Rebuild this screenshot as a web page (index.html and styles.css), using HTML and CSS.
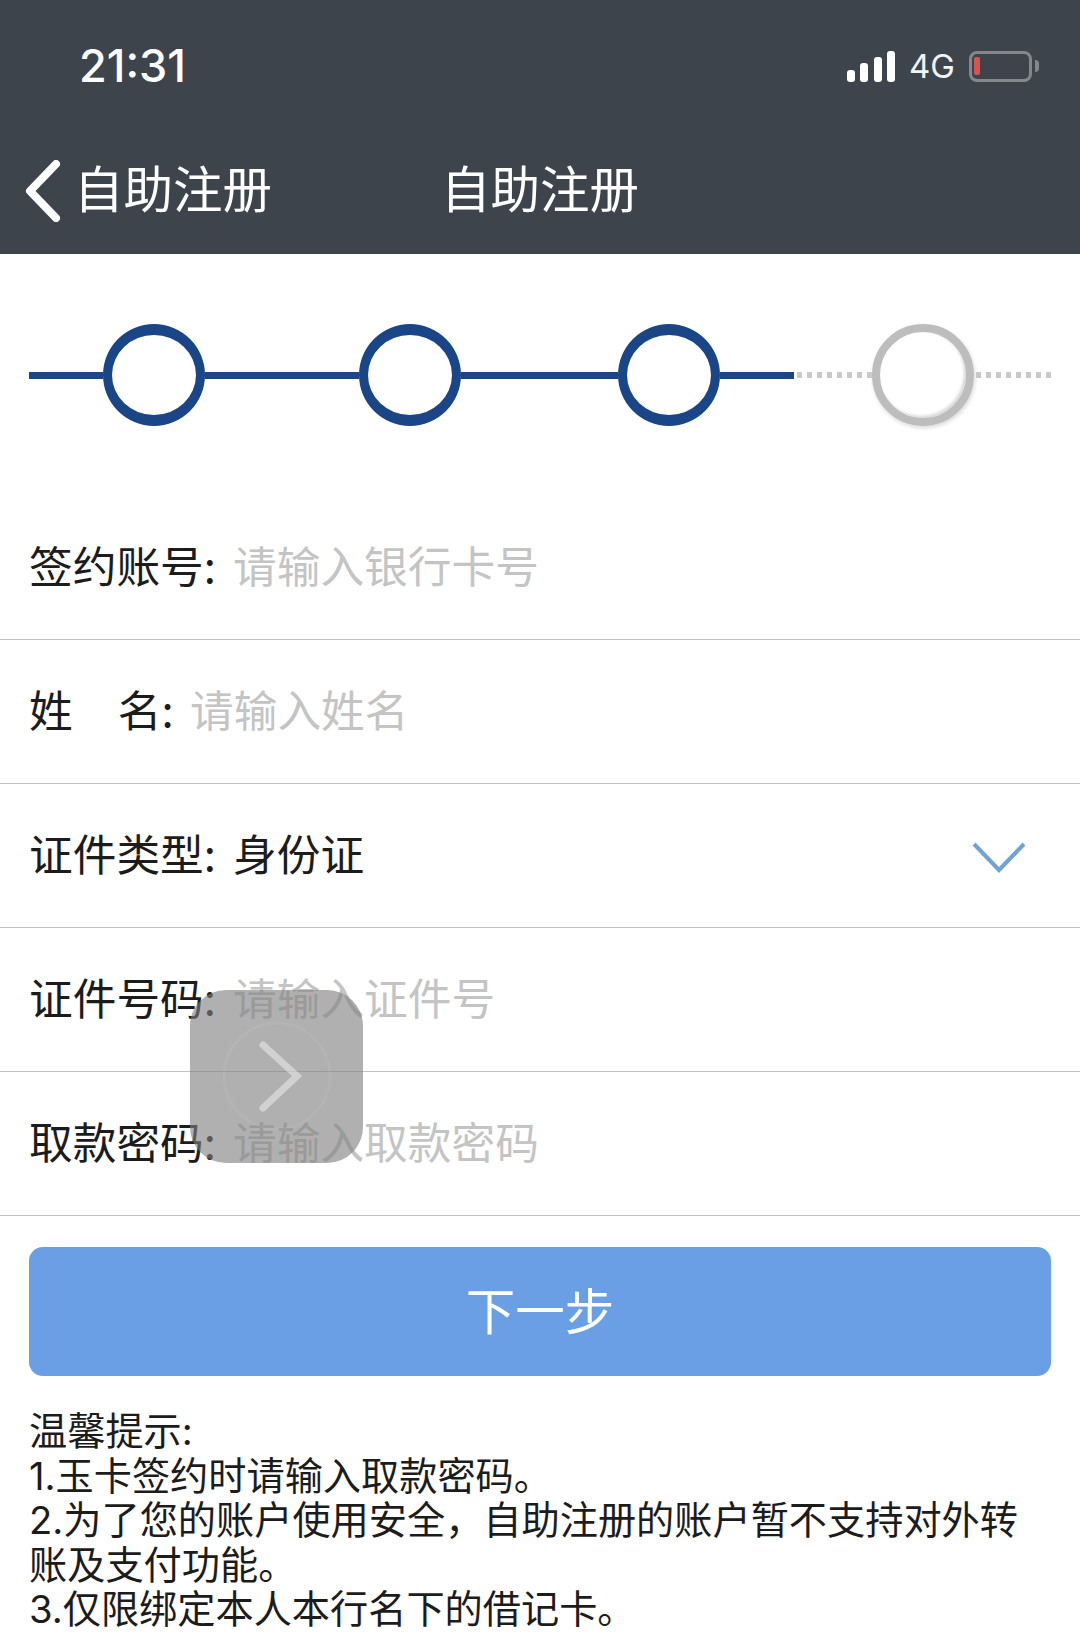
FILE: index.html
```html
<!DOCTYPE html>
<html lang="zh-CN">
<head>
<meta charset="utf-8">
<title>自助注册</title>
<link rel="stylesheet" href="styles.css">
</head>
<body>
<div class="page">
  <header class="header">
    <div class="status">
      <span class="time">21:31</span>
      <div class="status-right">
        <div class="signal"><i class="bar b1"></i><i class="bar b2"></i><i class="bar b3"></i><i class="bar b4"></i></div>
        <span class="net">4G</span>
        <div class="battery"><i class="charge"></i></div>
        <i class="nub"></i>
      </div>
    </div>
    <nav class="nav">
      <div class="back">
        <svg class="back-icon" width="36" height="62" viewBox="0 0 36 62"><path d="M31 4 L5 31 L31 58" fill="none" stroke="#fff" stroke-width="8" stroke-linecap="round" stroke-linejoin="round"/></svg>
        <span class="back-text">自助注册</span>
      </div>
      <div class="title">自助注册</div>
      <div></div>
    </nav>
  </header>

  <div class="steps">
    <i class="seg s-start"></i><i class="dot"></i>
    <i class="seg s-mid1"></i><i class="dot"></i>
    <i class="seg s-mid2"></i><i class="dot"></i>
    <i class="seg s-end"></i><i class="seg dotted s-d1"></i><i class="dot off"></i><i class="seg dotted s-d2"></i>
  </div>

  <form class="form">
    <div class="row"><span class="label">签约账号:</span><span class="ph">请输入银行卡号</span></div>
    <div class="row"><span class="label name">姓<b class="gap"></b>名:</span><span class="ph">请输入姓名</span></div>
    <div class="row"><span class="label">证件类型:</span><span class="val">身份证</span>
      <svg class="caret" width="54" height="32" viewBox="0 0 54 32"><path d="M2 3 L27 29 L52 3" fill="none" stroke="#6ea3d8" stroke-width="4"/></svg>
    </div>
    <div class="row"><span class="label">证件号码:</span><span class="ph">请输入证件号</span></div>
    <div class="row"><span class="label">取款密码:</span><span class="ph">请输入取款密码</span></div>
  </form>

  <div class="action"><button class="next" type="button">下一步</button></div>

  <div class="tips">
    <p>温馨提示:</p>
    <p>1.玉卡签约时请输入取款密码。</p>
    <p>2.为了您的账户使用安全，自助注册的账户暂不支持对外转账及支付功能。</p>
    <p>3.仅限绑定本人本行名下的借记卡。</p>
  </div>

  <div class="assist">
    <svg width="174" height="174" viewBox="0 0 174 174">
      <circle cx="87" cy="86" r="53" fill="none" stroke="#fff" stroke-opacity=".05" stroke-width="3"/>
      <path d="M73 55 L107 86 L73 118" fill="none" stroke="#fff" stroke-opacity=".42" stroke-width="7" stroke-linecap="round"/>
    </svg>
  </div>
</div>
</body>
</html>
```
FILE: styles.css
```css
* { box-sizing: border-box; }
html, body { margin: 0; padding: 0; background: #fff; }
body {
  font-family: "Noto Sans CJK SC", "Liberation Sans", sans-serif;
  color: #1c1c1c;
}
.page { position: relative; width: 1080px; height: 1648px; overflow: hidden; background: #fff; }

.header { height: 254px; background: #3e444c; color: #fff; display: flex; flex-direction: column; }
.status { height: 132px; display: flex; align-items: center; justify-content: space-between; padding: 0 41px 0 79px; }
.time { font-family: "Inter", sans-serif; font-weight: 500; font-size: 45px; line-height: 50px; }
.status-right { display: flex; align-items: center; }
.signal { display: flex; align-items: flex-end; gap: 5.5px; height: 31px; }
.bar { display: block; width: 8px; background: #fff; border-radius: 3px; }
.b1 { height: 12px; }
.b2 { height: 19px; }
.b3 { height: 25px; }
.b4 { height: 31px; }
.net { font-family: "Inter", sans-serif; font-size: 33px; line-height: 34px; margin: 0 14px; color: #f2f3f4; }
.battery { width: 63px; height: 31px; border: 3px solid #84888d; border-radius: 8px; padding: 3px 2px; }
.charge { display: block; width: 6px; height: 18px; background: #d9534f; border-radius: 2px; }
.nub { display: block; width: 4px; height: 12px; margin-left: 3px; background: #84888d; border-radius: 0 4px 4px 0; }

.nav { height: 122px; display: grid; grid-template-columns: 1fr auto 1fr; align-items: flex-start; font-size: 49.5px; }
.back { display: flex; align-items: center; padding-left: 25px; gap: 13px; margin-top: 28px; height: 62px; }
.back-icon { display: block; }
.back-text { line-height: 62px; margin-bottom: 8px; }
.title { margin-top: 24px; height: 62px; line-height: 62px; }

.steps { display: flex; align-items: center; padding: 70px 29px 0; height: 172px; margin-bottom: 70px; }
.seg { display: block; height: 7px; background: #1a4586; flex: none; }
.s-start { width: 74px; }
.s-mid1 { width: 154px; }
.s-mid2 { width: 157px; }
.s-end { width: 74px; }
.dotted { height: 6px; background: linear-gradient(90deg, transparent 50%, #c9c9c9 50%) right center / 10px 100% repeat-x; }
.s-d1 { width: 78px; }
.s-d2 { width: 77px; }
.dot { display: block; width: 102px; height: 102px; border-radius: 50%; border-style: solid; border-color: #1a4586; border-width: 11px 9px; flex: none; }
.dot.off { border-width: 8px; border-color: #bdbdbd; box-shadow: inset -2px -2px 3px #d8d8d8, 1px 2px 4px #d8d8d8; }

.form { display: flex; flex-direction: column; }
.row { height: 144px; display: flex; align-items: center; padding: 0 29px 8px 29px; border-bottom: 1px solid #c4c4c4; font-size: 43.7px; line-height: 60px; }
.label { width: 204px; flex: none; color: #1c1c1c; white-space: nowrap; }
.label.name { width: 161px; }
.gap { display: inline-block; width: 45px; }
.ph { color: #c4c4c4; }
.val { color: #1c1c1c; }
.caret { margin-left: auto; margin-right: 25px; position: relative; top: 5px; }

.action { padding: 31px 29px 0; }
.next { display: block; width: 100%; height: 129px; border: 0; border-radius: 14px; background: #6a9fe6; color: #fff; font: 400 49.5px/60px "Noto Sans CJK SC", sans-serif; padding: 0 0 5px; }

.tips { padding: 33px 60px 0 29px; font-family: "Inter", "Noto Sans CJK SC", sans-serif; font-size: 38.2px; line-height: 44.5px; color: #1c1c1c; }
.tips p { margin: 0; }

.assist { position: absolute; left: 190px; top: 990px; width: 173px; height: 173px; border-radius: 36px; background: rgba(128,128,128,.62); }
.assist svg { display: block; }
```
